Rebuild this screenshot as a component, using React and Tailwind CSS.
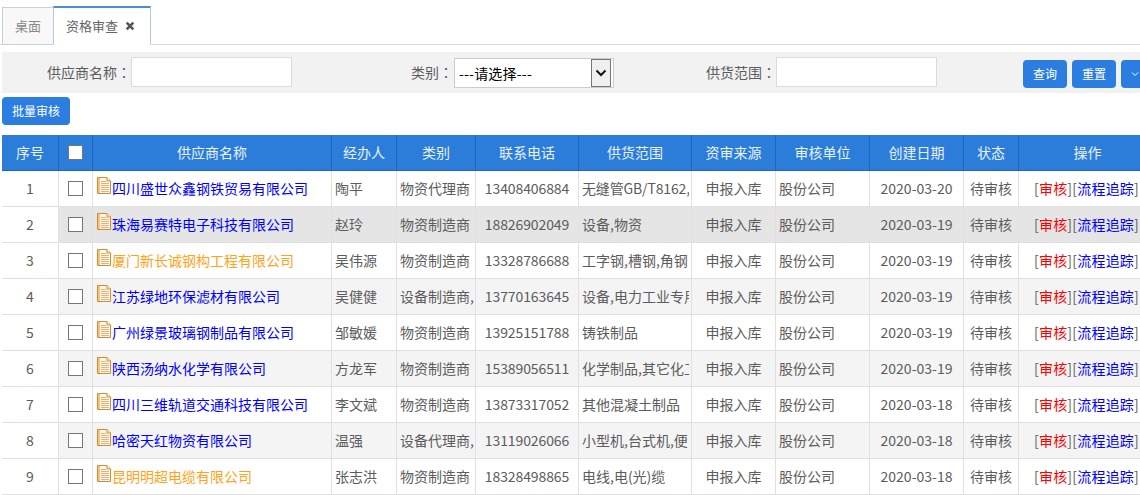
import React from "react";

const rows = [
  ["1","四川盛世众鑫钢铁贸易有限公司","b","陶平","物资代理商","13408406884","无缝管GB/T8162,","2020-03-20"],
  ["2","珠海易赛特电子科技有限公司","b","赵玲","物资制造商","18826902049","设备,物资","2020-03-19"],
  ["3","厦门新长诚钢构工程有限公司","o","吴伟源","物资制造商","13328786688","工字钢,槽钢,角钢","2020-03-19"],
  ["4","江苏绿地环保滤材有限公司","b","吴健健","设备制造商,","13770163645","设备,电力工业专用","2020-03-19"],
  ["5","广州绿景玻璃钢制品有限公司","b","邹敏媛","物资制造商","13925151788","铸铁制品","2020-03-19"],
  ["6","陕西汤纳水化学有限公司","b","方龙军","物资制造商","15389056511","化学制品,其它化工","2020-03-19"],
  ["7","四川三维轨道交通科技有限公司","b","李文斌","物资制造商","13873317052","其他混凝土制品","2020-03-18"],
  ["8","哈密天红物资有限公司","b","温强","设备代理商,","13119026066","小型机,台式机,便","2020-03-18"],
  ["9","昆明明超电缆有限公司","o","张志洪","物资制造商","18328498865","电线,电(光)缆","2020-03-18"],
];
const heads = ["序号","","供应商名称","经办人","类别","联系电话","供货范围","资审来源","审核单位","创建日期","状态","操作"];
const widths = [57,34,239,65,79,103,113,84,94,94,55,137];

function DocIcon() {
  return (
    <svg width="14" height="17" viewBox="0 0 14 17" className="shrink-0 -mt-[6px] mr-px">
      <path d="M.5 .5h9.500L13.500 4v12.500H.5z" fill="#fffaf0" stroke="#d98a2c" />
      <path d="M1 1h2v15H1z" fill="#f5c27c" />
      <path d="M10 .5V4h3.500" fill="#fde9c0" stroke="#d98a2c" />
      <path d="M4 4.500h5M4 6.500h8M4 8.500h8M4 10.500h8M4 12.500h8M4 14.500h8" stroke="#eab070" strokeWidth="1" />
    </svg>
  );
}

function Check() {
  return <input type="checkbox" className="appearance-none block mx-auto w-[15px] h-[15px] border border-[#767676] bg-white rounded-none" />;
}

function Btn({ children, className = "" }) {
  return (
    <button className={"h-7 rounded bg-[#2b7de0] text-white text-xs flex items-center justify-center shrink-0 " + className}>
      {children}
    </button>
  );
}

function Colon() {
  return <span className="font-['Noto_Sans_CJK_TC',sans-serif]">：</span>;
}

const base = "h-9 border-r border-b border-[#e0e0e0] overflow-hidden whitespace-nowrap ";
const cell = base + "px-1";
const leftCell = base + "pl-[3px] pr-0";
const clip = "block overflow-hidden";

export default function App() {
  return (
    <div className="w-[1140px] h-[495px] overflow-hidden bg-white text-[14px] text-[#5c5c5c] font-['Noto_Sans_CJK_SC','Microsoft_YaHei',sans-serif]">
      {/* tabs */}
      <div className="h-[45px] pt-1.5 pl-0.5 flex items-end border-b border-[#dcdcdc]">
        <div className="w-[51px] h-[38px] -mb-px flex items-center justify-center bg-[#f8f8f8] border border-[#c5d3e0] border-r-0 text-[13px] text-[#888]">桌面</div>
        <div className="w-[98px] h-[39px] -mb-px bg-white border border-[#b5c9dc] border-t-2 border-t-[#4a90c8] border-b-white flex items-center pl-3 gap-[7px] text-[13px] text-[#666]">
          <span>资格审查</span>
          <svg width="10" height="10" viewBox="0 0 10 10"><path d="M1.700 1.700l6.600 6.600M8.300 1.700L1.700 8.300" stroke="#555" strokeWidth="2.600" /></svg>
        </div>
      </div>
      {/* filter */}
      <div className="mt-[7px] ml-0.5 h-[41px] bg-[#f2f2f2] flex items-center">
        <label className="ml-[45px] w-[84px] shrink-0">供应商名称<Colon /></label>
        <input className="w-[161px] h-[30px] mb-[1px] bg-white border border-[#dcdcdc] shrink-0" />
        <label className="ml-[119px] w-[43px] shrink-0">类别<Colon /></label>
        <div className="relative w-[160px] h-[30px] shrink-0 mt-[1px]">
          <select className="appearance-none block w-full h-full bg-white border border-[#ccc] pl-1 text-[14px] tracking-[0.2px] text-black outline-none rounded-none">
            <option>---请选择---</option>
          </select>
          <span className="absolute right-[3px] top-[1px] w-[20px] h-[28px] bg-[#efefef] border border-[#767676] flex items-center justify-center pointer-events-none">
            <svg width="12" height="8" viewBox="0 0 12 8"><path d="M1.500 1.500L6 6l4.500-4.500" fill="none" stroke="#111" strokeWidth="2" /></svg>
          </span>
        </div>
        <label className="ml-[92px] w-[70px] shrink-0">供货范围<Colon /></label>
        <input className="w-[161px] h-[30px] mb-[1px] bg-white border border-[#dcdcdc] shrink-0" />
        <Btn className="ml-[86px] w-11 mt-[3px]">查询</Btn>
        <Btn className="ml-[5px] w-11 mt-[3px]">重置</Btn>
        <Btn className="ml-[5px] w-11 mt-[3px] justify-start pl-[10px]">
          <svg width="8" height="6" viewBox="0 0 8 6"><path d="M1 1.500l3 3 3-3" fill="none" stroke="#fff" strokeWidth="1" /></svg>
        </Btn>
      </div>
      <div className="ml-0.5 mt-1">
        <Btn className="w-[68px]">批量审核</Btn>
      </div>
      {/* table */}
      <table className="mt-2.5 ml-0.5 table-fixed border-separate border-spacing-0 w-[1154px]">
        <colgroup>
          {widths.map((w, i) => <col key={i} style={{ width: w }} />)}
        </colgroup>
        <thead>
          <tr className="bg-[#2b7dd9] text-white/90 text-[14px]">
            {heads.map((h, i) => (
              <th key={i} className="h-9 p-0 font-normal text-center border-r border-b border-[#1a66c0] last:border-r-0">
                {i === 1 ? <span className="block mx-auto w-[15px] h-[15px] bg-white border border-[#767676]" /> : h}
              </th>
            ))}
          </tr>
        </thead>
        <tbody>
          {rows.map((r, idx) => {
            const bg = idx === 1 ? "bg-[#e5e5e5]" : idx % 2 === 1 ? "bg-[#f4f4f4]" : "bg-white";
            return (
              <tr key={r[0]}>
                <td className={cell + " text-center bg-white"}>{r[0]}</td>
                <td className={cell + " " + bg}><Check /></td>
                <td className={cell + " " + bg}>
                  <div className={"flex items-center " + (r[2] === "b" ? "text-[#0000ff]" : "text-[#ffa31a]")}>
                    <DocIcon />
                    <span>{r[1]}</span>
                  </div>
                </td>
                <td className={leftCell + " " + bg}>{r[3]}</td>
                <td className={leftCell + " " + bg}><span className={clip + " w-[74px]"}>{r[4]}</span></td>
                <td className={cell + " text-center tracking-[-0.1px] " + bg}>{r[5]}</td>
                <td className={leftCell + " " + bg}><span className={clip + " w-[107px] " + (idx === 0 ? "tracking-[-0.15px]" : "")}>{r[6]}</span></td>
                <td className={cell + " text-center " + bg}>申报入库</td>
                <td className={leftCell + " " + bg}>股份公司</td>
                <td className={cell + " text-center " + bg}>{r[7]}</td>
                <td className={cell + " text-center " + bg}>待审核</td>
                <td className={base + "pl-1 pr-[6px] text-center border-r-0 tracking-[0.2px] " + bg}>
                  [<span className="text-[#ff0000]">审核</span>][<span className="text-[#0000ff]">流程追踪</span>]
                </td>
              </tr>
            );
          })}
        </tbody>
      </table>
    </div>
  );
}
